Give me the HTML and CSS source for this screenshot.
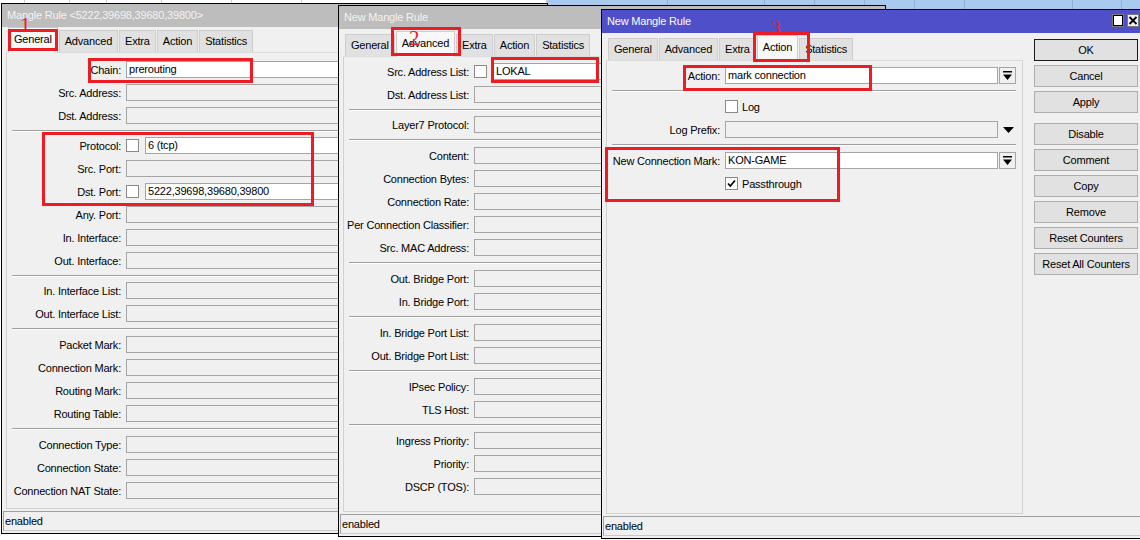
FILE: index.html
```html
<!DOCTYPE html>
<html lang="en">
<head>
    <meta charset="UTF-8">
    <title>Mangle Rule</title>
    <link rel="stylesheet" href="styles.css">
</head>
<body>
<div class="desk">
    <!-- list behind the dialogs -->
    <div class="list list-plain">
        <span style="width:25px"></span><span style="width:45px"></span><span style="width:37px"></span><span style="width:55px"></span><span style="width:70px"></span><span style="width:70px"></span><span style="width:245px"></span>
    </div>
    <div class="list list-sel">
        <span style="width:121px"></span><span style="width:97px"></span><span style="width:50px"></span><span style="width:50px"></span><span style="width:50px"></span><span style="width:50px"></span><span style="width:108px"></span><span style="width:49px"></span>
    </div>

    <!-- window 1 -->
    <div class="win w1">
        <div class="title">Mangle Rule &lt;5222,39698,39680,39800&gt;</div>
        <div class="body">
            <div class="main">
                <div class="tabs">
                    <span class="tab active">General</span>
                    <span class="tab">Advanced</span>
                    <span class="tab">Extra</span>
                    <span class="tab">Action</span>
                    <span class="tab">Statistics</span>
                </div>
                <div class="panel">
                    <div class="row"><label>Chain:</label><div class="field filled">prerouting</div></div>
                    <div class="row"><label>Src. Address:</label><div class="field"></div></div>
                    <div class="row"><label>Dst. Address:</label><div class="field"></div></div>
                    <div class="sep tight"></div>
                    <div class="row"><label>Protocol:</label><div class="check"></div><div class="field filled">6 (tcp)</div></div>
                    <div class="row"><label>Src. Port:</label><div class="field"></div></div>
                    <div class="row"><label>Dst. Port:</label><div class="check"></div><div class="field filled">5222,39698,39680,39800</div></div>
                    <div class="row"><label>Any. Port:</label><div class="field"></div></div>
                    <div class="row"><label>In. Interface:</label><div class="field"></div></div>
                    <div class="row"><label>Out. Interface:</label><div class="field"></div></div>
                    <div class="sep tight"></div>
                    <div class="row"><label>In. Interface List:</label><div class="field"></div></div>
                    <div class="row"><label>Out. Interface List:</label><div class="field"></div></div>
                    <div class="sep"></div>
                    <div class="row"><label>Packet Mark:</label><div class="field"></div></div>
                    <div class="row"><label>Connection Mark:</label><div class="field"></div></div>
                    <div class="row"><label>Routing Mark:</label><div class="field"></div></div>
                    <div class="row"><label>Routing Table:</label><div class="field"></div></div>
                    <div class="sep"></div>
                    <div class="row"><label>Connection Type:</label><div class="field"></div></div>
                    <div class="row"><label>Connection State:</label><div class="field"></div></div>
                    <div class="row"><label>Connection NAT State:</label><div class="field"></div></div>
                </div>
            </div>
        </div>
        <div class="status">enabled</div>
    </div>

    <!-- window 2 -->
    <div class="win w2">
        <div class="title">New Mangle Rule</div>
        <div class="body">
            <div class="main">
                <div class="tabs">
                    <span class="tab">General</span>
                    <span class="tab active">Advanced</span>
                    <span class="tab">Extra</span>
                    <span class="tab">Action</span>
                    <span class="tab">Statistics</span>
                </div>
                <div class="panel">
                    <div class="row"><label>Src. Address List:</label><div class="check"></div><div class="field filled">LOKAL</div></div>
                    <div class="row"><label>Dst. Address List:</label><div class="field"></div></div>
                    <div class="sep tight"></div>
                    <div class="row"><label>Layer7 Protocol:</label><div class="field"></div></div>
                    <div class="sep"></div>
                    <div class="row"><label>Content:</label><div class="field"></div></div>
                    <div class="row"><label>Connection Bytes:</label><div class="field"></div></div>
                    <div class="row"><label>Connection Rate:</label><div class="field"></div></div>
                    <div class="row"><label>Per Connection Classifier:</label><div class="field"></div></div>
                    <div class="row"><label>Src. MAC Address:</label><div class="field"></div></div>
                    <div class="sep"></div>
                    <div class="row"><label>Out. Bridge Port:</label><div class="field"></div></div>
                    <div class="row"><label>In. Bridge Port:</label><div class="field"></div></div>
                    <div class="sep"></div>
                    <div class="row"><label>In. Bridge Port List:</label><div class="field"></div></div>
                    <div class="row"><label>Out. Bridge Port List:</label><div class="field"></div></div>
                    <div class="sep"></div>
                    <div class="row"><label>IPsec Policy:</label><div class="field"></div></div>
                    <div class="row"><label>TLS Host:</label><div class="field"></div></div>
                    <div class="sep"></div>
                    <div class="row"><label>Ingress Priority:</label><div class="field"></div></div>
                    <div class="row"><label>Priority:</label><div class="field"></div></div>
                    <div class="row"><label>DSCP (TOS):</label><div class="field"></div></div>
                </div>
            </div>
        </div>
        <div class="status">enabled</div>
    </div>

    <!-- window 3 (active) -->
    <div class="win w3">
        <div class="title">
            <span>New Mangle Rule</span>
            <span class="title-btns">
                <span class="tbtn"><svg width="10" height="11" viewBox="0 0 10 11"><rect x="0.5" y="0.5" width="9" height="10" fill="#fff" stroke="#000"/></svg></span>
                <span class="tbtn"><svg width="10" height="11" viewBox="0 0 10 11"><path d="M1.5 2 L8.5 9 M8.5 2 L1.5 9" stroke="#000" stroke-width="1.8"/></svg></span>
            </span>
        </div>
        <div class="body">
            <div class="main">
                <div class="tabs">
                    <span class="tab">General</span>
                    <span class="tab">Advanced</span>
                    <span class="tab">Extra</span>
                    <span class="tab active">Action</span>
                    <span class="tab">Statistics</span>
                </div>
                <div class="panel">
                    <div class="row">
                        <label>Action:</label><div class="field filled">mark connection</div>
                        <div class="drop"><svg width="9" height="10" viewBox="0 0 9 10"><rect x="0" y="0" width="9" height="1.5"/><path d="M0 3.5 H9 L4.5 9 Z"/></svg></div>
                    </div>
                    <div class="sep"></div>
                    <div class="row"><label></label><div class="check"></div><span class="cb-text">Log</span></div>
                    <div class="row">
                        <label>Log Prefix:</label><div class="field"></div>
                        <div class="arrow"><svg width="11" height="6" viewBox="0 0 11 6"><path d="M0 0 H11 L5.5 6 Z"/></svg></div>
                    </div>
                    <div class="sep"></div>
                    <div class="row">
                        <label>New Connection Mark:</label><div class="field filled">KON-GAME</div>
                        <div class="drop"><svg width="9" height="10" viewBox="0 0 9 10"><rect x="0" y="0" width="9" height="1.5"/><path d="M0 3.5 H9 L4.5 9 Z"/></svg></div>
                    </div>
                    <div class="row">
                        <label></label>
                        <div class="check"><svg width="11" height="11" viewBox="0 0 11 11"><path d="M2 5.5 L4.3 8 L9 2.5" stroke="#000" stroke-width="1.7" fill="none"/></svg></div>
                        <span class="cb-text">Passthrough</span>
                    </div>
                </div>
            </div>
            <div class="buttons">
                <div class="btn default">OK</div>
                <div class="btn">Cancel</div>
                <div class="btn">Apply</div>
                <div class="btn spaced">Disable</div>
                <div class="btn">Comment</div>
                <div class="btn">Copy</div>
                <div class="btn">Remove</div>
                <div class="btn">Reset Counters</div>
                <div class="btn">Reset All Counters</div>
            </div>
        </div>
        <div class="status">enabled</div>
    </div>

    <!-- paint annotations -->
    <div class="mark" style="left:8px;top:29px;width:50px;height:22px"></div>
    <div class="mark" style="left:88px;top:58px;width:165px;height:25px"></div>
    <div class="mark" style="left:42px;top:132px;width:272px;height:74px"></div>
    <div class="mark" style="left:391px;top:27px;width:70px;height:29px"></div>
    <div class="mark" style="left:491px;top:57px;width:108px;height:26px"></div>
    <div class="mark" style="left:753px;top:32px;width:57px;height:30px"></div>
    <div class="mark" style="left:683px;top:65px;width:189px;height:26px"></div>
    <div class="mark" style="left:605px;top:147px;width:235px;height:55px"></div>
    <div class="num n1">1</div>
    <div class="num n2">2</div>
    <div class="num n3">3</div>
</div>
</body>
</html>
```

FILE: styles.css
```css
* {
    margin: 0;
    padding: 0;
    box-sizing: border-box;
}

body {
    width: 1140px;
    height: 540px;
    overflow: hidden;
    background: #fff;
    font-family: "Liberation Sans", Arial, sans-serif;
    font-size: 11px;
    color: #000;
}

.desk {
    position: relative;
    width: 1140px;
    height: 540px;
    overflow: hidden;
    background: #fff;
}

/* list rows peeking out behind the dialogs */
.list {
    position: absolute;
    top: 0;
    display: flex;
}

.list span {
    height: 100%;
    border-right: 1px solid #cfcfcf;
}

.list-plain {
    left: 0;
    width: 547px;
    height: 4px;
}

.list-sel {
    left: 547px;
    width: 593px;
    height: 10px;
    background: #a9c9ee;
}

.list-sel span {
    border-right-color: #8fb0d8;
}

/* dialog windows */
.win {
    position: absolute;
    display: flex;
    flex-direction: column;
    background: #f0f0f0;
    border: 1px solid #000;
    letter-spacing: -0.2px;
}

.w1 {
    left: 1px;
    top: 3px;
    width: 547px;
    height: 531px;
}

.w2 {
    left: 338px;
    top: 5px;
    width: 548px;
    height: 532px;
}

.w3 {
    left: 601px;
    top: 9px;
    width: 542px;
    height: 530px;
}

.title {
    height: 23px;
    line-height: 23px;
    padding-left: 5px;
    background: #bdbdbd;
    color: #f3f3f3;
    white-space: nowrap;
    flex-shrink: 0;
}

.w3 .title {
    background: #4f4fc9;
    color: #fff;
    display: flex;
    justify-content: space-between;
}

.title-btns {
    display: flex;
    gap: 3px;
    padding: 4px 3px 0 0;
}

.tbtn {
    width: 12px;
    height: 13px;
    background: #f0f0f0;
    border: 1px solid #7a7a7a;
    display: flex;
    align-items: center;
    justify-content: center;
}

.body {
    flex: 1;
    display: flex;
    min-height: 0;
}

.main {
    flex: 1;
    display: flex;
    flex-direction: column;
    min-width: 0;
}

.tabs {
    height: 25px;
    display: flex;
    align-items: flex-end;
    padding-left: 6px;
    flex-shrink: 0;
}

.w2 .tabs,
.w3 .tabs {
    height: 27px;
}

.tab {
    height: 22px;
    line-height: 21px;
    padding: 0 5px;
    margin-right: 1px;
    background: #e1e1e1;
    border: 1px solid #cdcdcd;
    border-bottom: none;
    white-space: nowrap;
}

.tab.active {
    height: 26px;
    line-height: 23px;
    margin-bottom: -1px;
    background: #f8f8f8;
    position: relative;
}

.panel {
    flex: 1;
    margin-left: 4px;
    border: 1px solid #d2d2d2;
    border-top-color: #dcdcdc;
    padding: 8px 6px 0 0;
    overflow: hidden;
}

.w2 .panel,
.w3 .panel {
    padding-top: 6px;
}

.row {
    display: flex;
    align-items: center;
    height: 17px;
    margin-bottom: 6px;
}

.row label {
    width: 114px;
    margin-right: 5px;
    text-align: right;
    white-space: nowrap;
    flex-shrink: 0;
}

.w2 .row label {
    width: 125px;
}

.w3 .row label {
    width: 113px;
}

.field {
    flex: 1;
    height: 17px;
    padding: 0 2px;
    line-height: 15px;
    background: #f0f0f0;
    border: 1px solid #a5a5a5;
    white-space: nowrap;
    overflow: hidden;
}

.field.filled {
    background: #fff;
}

.check {
    width: 13px;
    height: 13px;
    margin-right: 6px;
    background: #fff;
    border: 1px solid #8a8a8a;
    flex-shrink: 0;
    display: flex;
    align-items: center;
    justify-content: center;
}

.cb-text {
    margin-left: -2px;
}

.drop {
    width: 17px;
    height: 17px;
    margin-left: 1px;
    background: #f0f0f0;
    border: 1px solid #a5a5a5;
    display: flex;
    align-items: center;
    justify-content: center;
    flex-shrink: 0;
}

.arrow {
    width: 18px;
    display: flex;
    justify-content: center;
    padding-left: 2px;
    flex-shrink: 0;
}

.sep {
    height: 2px;
    margin: 1px 0 6px 5px;
    border-top: 1px solid #a0a0a0;
    border-bottom: 1px solid #fff;
}

.sep.tight {
    margin-bottom: 5px;
}

.status {
    height: 20px;
    margin: 2px 1px;
    padding-left: 1px;
    line-height: 19px;
    border-top: 1px solid #a0a0a0;
    border-left: 1px solid #a0a0a0;
    border-bottom: 1px solid #c8c8c8;
    flex-shrink: 0;
}

.buttons {
    width: 104px;
    margin: 6px 4px 0 11px;
    display: flex;
    flex-direction: column;
    gap: 4px;
    flex-shrink: 0;
}

.btn {
    height: 22px;
    line-height: 20px;
    text-align: center;
    background: #e1e1e1;
    border: 1px solid #adadad;
    white-space: nowrap;
}

.btn.default {
    border-color: #1a1a1a;
}

.btn.spaced {
    margin-top: 6px;
}

/* red paint marks */
.mark {
    position: absolute;
    border: 3px solid #ed1c24;
}

.num {
    position: absolute;
    color: #ed1c24;
    font-family: "Liberation Serif", serif;
    line-height: 1;
}

.n1 {
    left: 20px;
    top: 15px;
    font-size: 21px;
}

.n2 {
    left: 409px;
    top: 28px;
    font-size: 21px;
}

.n3 {
    left: 771px;
    top: 18px;
    font-size: 19px;
}
```
